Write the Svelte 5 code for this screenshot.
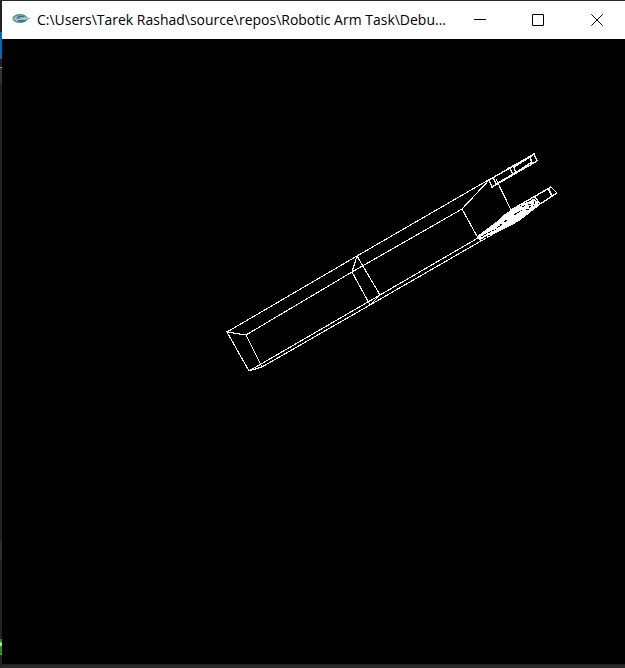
<script>
  const title = 'C:\\Users\\Tarek Rashad\\source\\repos\\Robotic Arm Task\\Debu...';
  // Canvas coordinates of the wireframe segments
  const arm = [
    'M225 293L355 217L488 140', 'M244 296L350 233L460 170',
    'M247 332L378 256L476 199', 'M260 328L368 266L479 202',
    'M225 293L244 296L260 328L247 332Z', 'M355 217L350 233L368 266L378 256Z',
    'M488 140L460 170L476 199L479 202', 'M494 140L509 171'
  ];
  const fingers = [
    'M487 141L532 115L535 122L490 148Z', 'M491 139L495 146',
    'M507 128L511 135M511 126L514 134', 'M494 145L513 134L530 123',
    'M512 128L528 118L530 124M528 118L532 115',
    'M509 171L549 148L555 154L538 165L516 182', 'M546 149L550 157M533 158L538 165M531 160L535 167'
  ];
</script>

<div class="desktop">
  <aside><i class="blue"></i><i class="rule"></i><i class="panel"></i><i class="marker"></i><i class="green"></i></aside>
  <main>
    <header>
      <svg class="logo" width="20" height="12" viewBox="0 0 20 12">
        <ellipse cx="8" cy="5.5" rx="6.8" ry="3.8" fill="#a7c4ca" stroke="#548f9a" stroke-width="1.5" />
        <path d="M5 5.5Q7 2.5 12 4M6 7.5Q10 9 14 6.5" fill="none" stroke="#326d79" stroke-width="1.5" />
        <path d="M7 5.5Q11 3.5 18 5.5Q12 8 7 5.5" fill="#d5e1e3" stroke="#7ca4ac" stroke-width=".8" />
      </svg>
      <svg class="title" width="412" height="30"><text x="0" y="20" textLength="409" lengthAdjust="spacingAndGlyphs">{title}</text></svg>
      <nav>
        <svg width="12" height="12"><path d="M0 5.5H12" /></svg>
        <svg width="12" height="12"><path d="M.5 .5H11.5V11.5H.5Z" /></svg>
        <svg class="close" width="12" height="12"><path d="M.3 .3L11.7 11.7M11.7 .3L.3 11.7" /></svg>
      </nav>
    </header>
    <svg class="scene" width="623" height="625" viewBox="0 0 623 625">
      {#each arm as d}<path {d} />{/each}
      <path class="mesh" d="M476 197L483 192L495 183L501 177L510 171L519 167L524 164L524 175L516 182L505 188L493 194L479 202Z" />
      <path class="mesh" d="M524 165L532 160L536 165L524 174Z" />
      {#each fingers as d}<path class="finger" {d} />{/each}
      <path class="gaps" d="M479 198L486 194L494 190M479 201L488 196M495 189L501 184M502 183L505 181M512 176L520 171M520 168L524 166M526 165L529 166L526 171L523 170M532 162L533 165L531 167" />
      <path class="gaps solid" d="M540 157L545 154M541 160L546 156" />
    </svg>
    <footer></footer>
  </main>
</div>

<style>
  :global(body) { background: #1d1d1f; overflow: hidden; }
  .desktop { display: flex; width: 625px; height: 668px; background: #28272a; }
  aside { display: flex; flex-direction: column; width: 2px; height: 668px; box-sizing: border-box; padding-top: 32px; background: #222224; }
  aside i { width: 2px; flex: none; }
  .blue { height: 27px; background: #0869ae; }
  .rule { height: 1px; margin-top: 8px; background: #7890a0; }
  .panel { height: 16px; background: #343436; }
  .marker { height: 20px; margin-top: 456px; background: #303032; }
  .green { height: 16px; margin-top: 79px; background: linear-gradient(#328b32 0 3px, #c5dcc5 4px 6px, #218721 8px 14px, #70a870); }
  main { display: flex; flex-direction: column; width: 623px; padding-top: 1px; }
  header { display: flex; align-items: center; height: 38px; background: #fff; flex: none; }
  svg { display: block; flex: none; }
  .logo { margin-left: 10px; margin-bottom: 2px; }
  .title { margin-left: 5px; overflow: visible; }
  text { font: 15px "Open Sans", "Noto Sans", sans-serif; fill: #000; }
  nav { display: flex; gap: 46px; margin-left: 25px; }
  nav path { fill: none; stroke: #000; stroke-width: 1; }
  .close { margin-left: 1px; }
  .scene { background: #000; }
  .scene path { fill: none; stroke: #f2f2f2; stroke-width: 1.1; shape-rendering: crispEdges; }
  .scene .finger { stroke-width: 1.4; }
  .scene .mesh { fill: #fff; }
  .scene .gaps { stroke: #000; stroke-width: 1; stroke-dasharray: 3 1; }
  .scene .solid { stroke-dasharray: none; }
  footer { height: 4px; border-top: 1px solid #212122; box-sizing: border-box; background: #29282d; }
</style>
